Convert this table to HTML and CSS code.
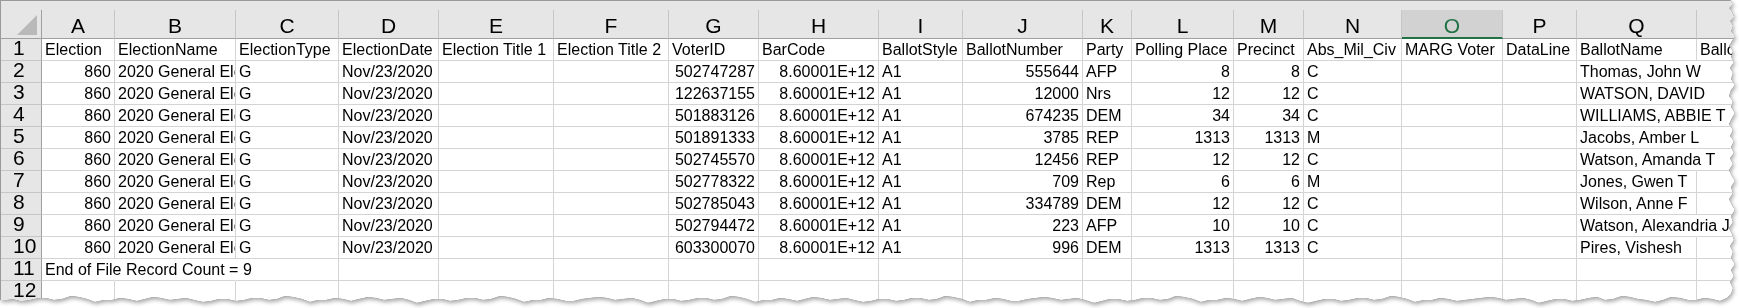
FILE: index.html
```html
<!DOCTYPE html>
<html lang="en">
<head>
<meta charset="utf-8">
<title>Sheet</title>
<link rel="stylesheet" href="styles.css">
</head>
<body>
<div class="paper">
  <div class="sheet">
    <div class="strip"></div>
    <div class="grid">
      <div class="corner"><svg width="20" height="20" viewBox="0 0 20 20"><polygon points="20,0 20,20 0,20" fill="#b9b9b9"/></svg></div>
      <div class="ch">A</div><div class="ch">B</div><div class="ch">C</div><div class="ch">D</div><div class="ch">E</div><div class="ch">F</div><div class="ch">G</div><div class="ch">H</div><div class="ch">I</div><div class="ch">J</div><div class="ch">K</div><div class="ch">L</div><div class="ch">M</div><div class="ch">N</div><div class="ch sel">O</div><div class="ch">P</div><div class="ch">Q</div><div class="ch">R</div>

      <div class="rh">1</div>
      <div class="c">Election</div><div class="c">ElectionName</div><div class="c">ElectionType</div><div class="c">ElectionDate</div><div class="c">Election Title 1</div><div class="c">Election Title 2</div><div class="c">VoterID</div><div class="c">BarCode</div><div class="c">BallotStyle</div><div class="c">BallotNumber</div><div class="c">Party</div><div class="c">Polling Place</div><div class="c">Precinct</div><div class="c">Abs_Mil_Civ</div><div class="c">MARG Voter</div><div class="c">DataLine</div><div class="c">BallotName</div><div class="c">BallotLabel</div>

      <div class="rh">2</div>
      <div class="c r">860</div><div class="c">2020 General Election</div><div class="c">G</div><div class="c">Nov/23/2020</div><div class="c"></div><div class="c"></div><div class="c r">502747287</div><div class="c r">8.60001E+12</div><div class="c">A1</div><div class="c r">555644</div><div class="c">AFP</div><div class="c r">8</div><div class="c r">8</div><div class="c">C</div><div class="c"></div><div class="c"></div><div class="c sp">Thomas, John W</div><div class="c"></div>

      <div class="rh">3</div>
      <div class="c r">860</div><div class="c">2020 General Election</div><div class="c">G</div><div class="c">Nov/23/2020</div><div class="c"></div><div class="c"></div><div class="c r">122637155</div><div class="c r">8.60001E+12</div><div class="c">A1</div><div class="c r">12000</div><div class="c">Nrs</div><div class="c r">12</div><div class="c r">12</div><div class="c">C</div><div class="c"></div><div class="c"></div><div class="c sp">WATSON, DAVID</div><div class="c"></div>

      <div class="rh">4</div>
      <div class="c r">860</div><div class="c">2020 General Election</div><div class="c">G</div><div class="c">Nov/23/2020</div><div class="c"></div><div class="c"></div><div class="c r">501883126</div><div class="c r">8.60001E+12</div><div class="c">A1</div><div class="c r">674235</div><div class="c">DEM</div><div class="c r">34</div><div class="c r">34</div><div class="c">C</div><div class="c"></div><div class="c"></div><div class="c sp">WILLIAMS, ABBIE T</div><div class="c"></div>

      <div class="rh">5</div>
      <div class="c r">860</div><div class="c">2020 General Election</div><div class="c">G</div><div class="c">Nov/23/2020</div><div class="c"></div><div class="c"></div><div class="c r">501891333</div><div class="c r">8.60001E+12</div><div class="c">A1</div><div class="c r">3785</div><div class="c">REP</div><div class="c r">1313</div><div class="c r">1313</div><div class="c">M</div><div class="c"></div><div class="c"></div><div class="c sp">Jacobs, Amber L</div><div class="c"></div>

      <div class="rh">6</div>
      <div class="c r">860</div><div class="c">2020 General Election</div><div class="c">G</div><div class="c">Nov/23/2020</div><div class="c"></div><div class="c"></div><div class="c r">502745570</div><div class="c r">8.60001E+12</div><div class="c">A1</div><div class="c r">12456</div><div class="c">REP</div><div class="c r">12</div><div class="c r">12</div><div class="c">C</div><div class="c"></div><div class="c"></div><div class="c sp">Watson, Amanda T</div><div class="c"></div>

      <div class="rh">7</div>
      <div class="c r">860</div><div class="c">2020 General Election</div><div class="c">G</div><div class="c">Nov/23/2020</div><div class="c"></div><div class="c"></div><div class="c r">502778322</div><div class="c r">8.60001E+12</div><div class="c">A1</div><div class="c r">709</div><div class="c">Rep</div><div class="c r">6</div><div class="c r">6</div><div class="c">M</div><div class="c"></div><div class="c"></div><div class="c">Jones, Gwen T</div><div class="c"></div>

      <div class="rh">8</div>
      <div class="c r">860</div><div class="c">2020 General Election</div><div class="c">G</div><div class="c">Nov/23/2020</div><div class="c"></div><div class="c"></div><div class="c r">502785043</div><div class="c r">8.60001E+12</div><div class="c">A1</div><div class="c r">334789</div><div class="c">DEM</div><div class="c r">12</div><div class="c r">12</div><div class="c">C</div><div class="c"></div><div class="c"></div><div class="c">Wilson, Anne F</div><div class="c"></div>

      <div class="rh">9</div>
      <div class="c r">860</div><div class="c">2020 General Election</div><div class="c">G</div><div class="c">Nov/23/2020</div><div class="c"></div><div class="c"></div><div class="c r">502794472</div><div class="c r">8.60001E+12</div><div class="c">A1</div><div class="c r">223</div><div class="c">AFP</div><div class="c r">10</div><div class="c r">10</div><div class="c">C</div><div class="c"></div><div class="c"></div><div class="c sp">Watson, Alexandria J</div><div class="c"></div>

      <div class="rh">10</div>
      <div class="c r">860</div><div class="c">2020 General Election</div><div class="c">G</div><div class="c">Nov/23/2020</div><div class="c"></div><div class="c"></div><div class="c r">603300070</div><div class="c r">8.60001E+12</div><div class="c">A1</div><div class="c r">996</div><div class="c">DEM</div><div class="c r">1313</div><div class="c r">1313</div><div class="c">C</div><div class="c"></div><div class="c"></div><div class="c">Pires, Vishesh</div><div class="c"></div>

      <div class="rh">11</div>
      <div class="c sp">End of File Record Count = 9</div><div class="c sp"></div><div class="c"></div><div class="c"></div><div class="c"></div><div class="c"></div><div class="c"></div><div class="c"></div><div class="c"></div><div class="c"></div><div class="c"></div><div class="c"></div><div class="c"></div><div class="c"></div><div class="c"></div><div class="c"></div><div class="c"></div><div class="c"></div>

      <div class="rh">12</div>
      <div class="c"></div><div class="c"></div><div class="c"></div><div class="c"></div><div class="c"></div><div class="c"></div><div class="c"></div><div class="c"></div><div class="c"></div><div class="c"></div><div class="c"></div><div class="c"></div><div class="c"></div><div class="c"></div><div class="c"></div><div class="c"></div><div class="c"></div><div class="c"></div>
    </div>
  </div>
</div>
</body>
</html>
```

FILE: styles.css
```css
html, body {
  margin: 0;
  padding: 0;
  background: #ffffff;
}

body {
  font-family: "Liberation Sans", Arial, sans-serif;
  color: #000;
}

.paper {
  width: 1739px;
  height: 308px;
  filter: drop-shadow(0 0 0.6px #3a3a3a) drop-shadow(1px 2px 2px rgba(0, 0, 0, 0.35));
}

.sheet {
  box-sizing: border-box;
  width: 1739px;
  height: 308px;
  background: #ffffff;
  border-top: 1px solid #9a9a9a;
  border-left: 1px solid #9a9a9a;
  overflow: hidden;
  clip-path: polygon(
    0px 0px, 1730px 0px,
    1733px 4px, 1729px 8px, 1732px 12px, 1734px 17px, 1730px 21px, 1733px 26px, 1731px 31px, 1735px 36px,
    1732px 41px, 1729px 46px, 1733px 51px, 1731px 57px, 1734px 62px, 1730px 68px, 1733px 73px, 1731px 79px,
    1735px 85px, 1731px 90px, 1729px 96px, 1733px 101px, 1731px 107px, 1735px 113px, 1732px 118px, 1729px 124px,
    1733px 130px, 1730px 136px, 1734px 141px, 1731px 147px, 1734px 153px, 1730px 158px, 1733px 164px, 1729px 170px,
    1732px 176px, 1735px 181px, 1731px 187px, 1733px 193px, 1729px 199px, 1732px 205px, 1735px 210px, 1731px 216px,
    1733px 222px, 1729px 228px, 1732px 234px, 1734px 240px, 1730px 246px, 1733px 252px, 1731px 258px, 1735px 264px,
    1731px 270px, 1734px 276px, 1730px 282px, 1733px 288px, 1731px 294px, 1727px 298px,
    1720px 301px, 1712px 299px, 1704px 298px, 1696px 300px, 1688px 300px, 1680px 298px, 1671px 297px, 1663px 300px,
    1655px 302px, 1646px 300px, 1638px 299px, 1630px 297px, 1622px 296px, 1613px 299px, 1605px 300px, 1597px 297px,
    1589px 298px, 1580px 300px, 1572px 301px, 1564px 299px, 1556px 299px, 1547px 301px, 1539px 303px, 1531px 300px,
    1523px 298px, 1514px 299px, 1506px 300px, 1498px 298px, 1490px 297px, 1481px 298px, 1473px 299px, 1465px 300px,
    1457px 301px, 1448px 299px, 1440px 298px, 1432px 300px, 1424px 300px, 1415px 302px, 1407px 299px, 1399px 297px,
    1391px 296px, 1382px 299px, 1374px 300px, 1366px 298px, 1358px 298px, 1349px 300px, 1341px 301px, 1333px 299px,
    1325px 299px, 1316px 301px, 1308px 303px, 1300px 301px, 1292px 298px, 1283px 299px, 1275px 300px, 1267px 298px,
    1259px 297px, 1250px 299px, 1242px 301px, 1234px 299px, 1226px 298px, 1217px 300px, 1209px 300px, 1201px 302px,
    1193px 299px, 1184px 297px, 1176px 296px, 1168px 299px, 1160px 300px, 1151px 298px, 1143px 298px, 1135px 300px,
    1127px 301px, 1118px 299px, 1110px 299px, 1102px 301px, 1094px 303px, 1085px 300px, 1077px 298px, 1069px 299px,
    1061px 300px, 1052px 298px, 1044px 297px, 1036px 298px, 1028px 299px, 1019px 301px, 1011px 301px, 1003px 299px,
    995px 298px, 986px 300px, 978px 300px, 970px 302px, 962px 299px, 953px 297px, 945px 296px, 937px 299px,
    929px 300px, 920px 298px, 912px 298px, 904px 300px, 896px 301px, 887px 299px, 879px 299px, 871px 301px,
    863px 302px, 854px 300px, 846px 298px, 838px 299px, 830px 300px, 821px 298px, 813px 297px, 805px 299px,
    797px 301px, 788px 299px, 780px 298px, 772px 300px, 764px 300px, 755px 302px, 747px 299px, 739px 297px,
    731px 296px, 722px 299px, 714px 300px, 706px 298px, 698px 298px, 689px 300px, 681px 301px, 673px 299px,
    665px 299px, 656px 301px, 648px 303px, 640px 300px, 632px 298px, 623px 299px, 615px 300px, 607px 298px,
    599px 297px, 590px 298px, 582px 299px, 574px 301px, 566px 301px, 557px 299px, 549px 298px, 541px 300px,
    533px 300px, 524px 302px, 516px 299px, 508px 297px, 500px 296px, 491px 299px, 483px 300px, 475px 298px,
    467px 298px, 458px 300px, 450px 301px, 442px 299px, 434px 299px, 425px 301px, 417px 303px, 409px 300px,
    401px 298px, 392px 299px, 384px 300px, 376px 298px, 368px 297px, 359px 299px, 351px 301px, 343px 299px,
    335px 298px, 326px 300px, 318px 300px, 310px 302px, 302px 299px, 293px 297px, 285px 296px, 277px 299px,
    269px 300px, 260px 298px, 252px 298px, 244px 300px, 236px 301px, 227px 299px, 219px 299px, 211px 301px,
    203px 302px, 194px 300px, 186px 298px, 178px 299px, 170px 300px, 161px 298px, 153px 297px, 145px 299px,
    137px 301px, 128px 299px, 120px 298px, 112px 300px, 104px 300px, 95px 302px, 87px 299px, 79px 297px,
    71px 296px, 62px 299px, 54px 300px, 46px 298px, 38px 298px, 29px 300px, 21px 301px, 13px 299px,
    5px 300px, 0px 300px
  );
}

.strip {
  height: 9px;
  background: #e6e6e6;
}

.grid {
  display: grid;
  grid-template-columns: 41px 73px 121px 103px 100px 115px 115px 90px 120px 84px 120px 49px 102px 70px 98px 101px 74px 120px 120px;
  grid-template-rows: 29px repeat(12, 22px);
}

.corner {
  box-sizing: border-box;
  background: #e6e6e6;
  border-right: 1px solid #a0a0a0;
  border-bottom: 1px solid #a0a0a0;
  display: flex;
  justify-content: flex-end;
  align-items: flex-end;
  padding: 0 4px 3px 0;
}

.corner svg {
  display: block;
}

.ch {
  box-sizing: border-box;
  background: #e6e6e6;
  border-right: 1px solid #c6c6c6;
  border-bottom: 1px solid #a0a0a0;
  text-align: center;
  font-size: 21px;
  line-height: 25px;
  padding-top: 3px;
  white-space: nowrap;
  overflow: hidden;
}

.ch.sel {
  background: #d2d2d2;
  color: #217346;
  border-bottom: 2px solid #217346;
}

.rh {
  box-sizing: border-box;
  background: #e6e6e6;
  border-right: 1px solid #a0a0a0;
  border-bottom: 1px solid #c6c6c6;
  font-size: 21px;
  line-height: 18px;
  padding-left: 12px;
  white-space: nowrap;
  overflow: hidden;
}

.c {
  box-sizing: border-box;
  border-right: 1px solid #d4d4d4;
  border-bottom: 1px solid #d4d4d4;
  padding: 0 3px;
  font-size: 16px;
  line-height: 21px;
  white-space: nowrap;
  overflow: hidden;
}

.r {
  text-align: right;
}

.sp {
  overflow: visible;
  border-right-color: transparent;
}
```
